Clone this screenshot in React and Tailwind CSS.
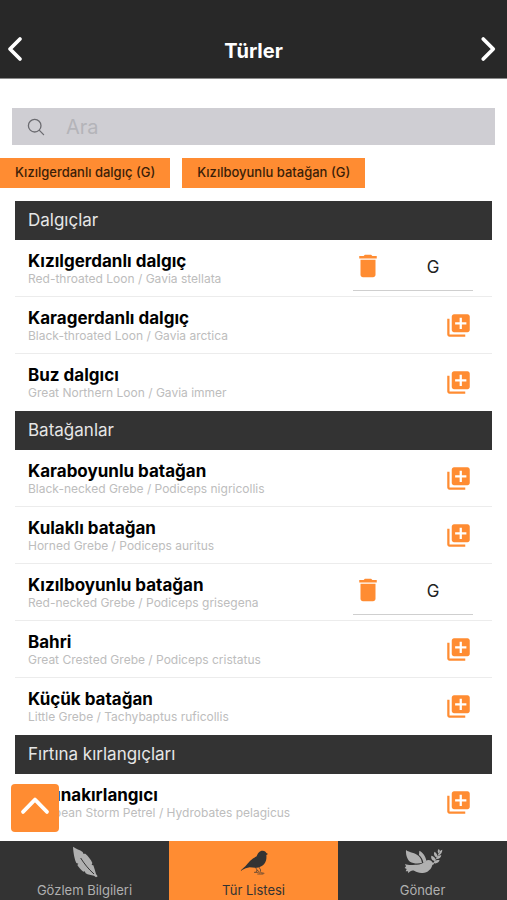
import { useState } from "react";
import { MdDelete, MdLibraryAdd } from "react-icons/md";

const GROUPS = [
  {
    title: "Dalgıçlar",
    species: [
      { name: "Kızılgerdanlı dalgıç", info: "Red-throated Loon / Gavia stellata" },
      { name: "Karagerdanlı dalgıç", info: "Black-throated Loon / Gavia arctica" },
      { name: "Buz dalgıcı", info: "Great Northern Loon / Gavia immer" },
    ],
  },
  {
    title: "Batağanlar",
    species: [
      { name: "Karaboyunlu batağan", info: "Black-necked Grebe / Podiceps nigricollis" },
      { name: "Kulaklı batağan", info: "Horned Grebe / Podiceps auritus" },
      { name: "Kızılboyunlu batağan", info: "Red-necked Grebe / Podiceps grisegena" },
      { name: "Bahri", info: "Great Crested Grebe / Podiceps cristatus" },
      { name: "Küçük batağan", info: "Little Grebe / Tachybaptus ruficollis" },
    ],
  },
  {
    title: "Fırtına kırlangıçları",
    species: [{ name: "Fırtınakırlangıcı", info: "European Storm Petrel / Hydrobates pelagicus" }],
  },
];

function Chevron({ d, className }) {
  return (
    <svg viewBox="0 0 24 24" fill="none" stroke="currentColor" strokeLinecap="round" strokeLinejoin="round" className={className}>
      <path d={d} />
    </svg>
  );
}

function SearchIcon() {
  return (
    <svg viewBox="0 0 18 18" fill="none" stroke="currentColor" strokeWidth="1.3" strokeLinecap="round" className="size-[18px] shrink-0 text-[#6b6b70]">
      <circle cx="7.7" cy="7.7" r="6.3" />
      <path d="M12.4 12.4 L16.6 16.6" />
    </svg>
  );
}

function FeatherIcon() {
  return (
    <svg viewBox="14 12 120 102" fill="currentColor" className="h-[34px] w-10">
      <path d="M38 17 C48 24 58 26 67 33 L69 38 L75 38 C84 46 92 56 96 66 L94 72 L99 73 C102 82 105 92 107 99 L112 106 L107 109 L101 104 C92 103 83 101 76 97 L73 91 L69 92 C62 87 55 79 51 72 L54 68 L48 66 C43 55 39 36 38 17 Z" />
      <path d="M61 51 C71 67 84 84 101 99" fill="none" stroke="#333333" strokeWidth="3" />
    </svg>
  );
}

function BirdIcon() {
  return (
    <svg viewBox="10 12 120 102" fill="currentColor" className="h-[34px] w-10">
      <path d="M28 90 L44 76 C54 63 64 52 78 46 C81 37 86 29 96 29 C102 29 106 32 107 36 L112 39 L107 42 C108 52 107 62 100 70 C95 76 87 79 79 80 C71 81 64 79 57 79 L45 82 Z" />
      <g fill="none" stroke="currentColor" strokeWidth="2">
        <path d="M74 78 L79 87 L76 94 M70 94 L84 94 M79 87 L85 92" />
        <path d="M84 77 L90 87 L87 97 M80 99 L98 99 M90 95 L101 97" />
      </g>
    </svg>
  );
}

function DoveIcon() {
  return (
    <svg viewBox="13 12 120 102" fill="currentColor" className="h-[34px] w-10">
      <path d="M22 27 C32 35 50 35 60 45 C67 52 69 60 70 66 C58 68 43 68 34 62 C25 55 21 40 22 27 Z" />
      <path d="M62 29 C73 35 82 47 83 60 L74 66 C73 57 69 49 61 42 Z" />
      <path d="M50 71 C62 72 72 69 80 61 C87 55 97 56 101 64 L107 68 L101 72 C98 84 88 95 72 96 C61 97 54 93 48 90 C40 87 35 90 29 97 L28 91 L21 91 L24 84 L18 81 L22 76 L19 69 C30 73 39 72 50 71 Z" />
      <path d="M103 70 C109 59 117 44 129 27" fill="none" stroke="currentColor" strokeWidth="2.5" />
      <path d="M109 60 C100 59 96 52 98 44 C106 46 112 51 109 60 Z M115 49 C107 47 104 40 107 32 C114 36 118 42 115 49 Z M121 38 C116 35 116 29 120 24 C125 28 125 33 121 38 Z M105 66 C112 69 120 66 123 58 C115 55 108 58 105 66 Z M113 54 C120 55 127 51 128 43 C120 42 115 46 113 54 Z M119 43 C126 41 131 35 131 26 C123 30 119 35 119 43 Z" />
    </svg>
  );
}

const TABS = [
  { id: "info", label: "Gözlem Bilgileri", Icon: FeatherIcon },
  { id: "list", label: "Tür Listesi", Icon: BirdIcon },
  { id: "send", label: "Gönder", Icon: DoveIcon },
];

function SpeciesRow({ item, code, onAdd, onRemove, onCode }) {
  return (
    <li className="flex h-[57px] items-center justify-between border-b border-[#ececec] pl-[13px] last:border-b-transparent">
      <div className="min-w-0 pt-0.5 whitespace-nowrap">
        <h3 className="text-[17px] leading-5 font-bold text-black">{item.name}</h3>
        <p className="text-[12px] leading-4 text-[#bdbdbd]">{item.info}</p>
      </div>
      {code !== undefined ? (
        <div className="mr-[19px] flex h-[46px] w-[120px] shrink-0 items-center border-b border-[#cfcfcf]">
          <button aria-label={`${item.name} sil`} onClick={onRemove} className="pb-1 text-[#ff8c32]">
            <MdDelete className="size-[30px]" />
          </button>
          <input
            aria-label={`${item.name} kodu`}
            value={code}
            onChange={(e) => onCode(e.target.value)}
            className="ml-auto w-20 bg-transparent text-center text-[17px] text-[#222222] outline-none"
          />
        </div>
      ) : (
        <button aria-label={`${item.name} ekle`} onClick={onAdd} className="mr-5 shrink-0 text-[#ff8c32]">
          <MdLibraryAdd className="size-[27px]" />
        </button>
      )}
    </li>
  );
}

export default function App() {
  const [query, setQuery] = useState("");
  const [tab, setTab] = useState("list");
  const [selected, setSelected] = useState({
    "Kızılgerdanlı dalgıç": "G",
    "Kızılboyunlu batağan": "G",
  });

  const setCode = (name, code) => setSelected((prev) => ({ ...prev, [name]: code }));

  const remove = (name) => {
    setSelected((prev) => {
      const next = { ...prev };
      delete next[name];
      return next;
    });
  };

  const matches = (item) => `${item.name} ${item.info}`.toLowerCase().includes(query.toLowerCase());

  return (
    <div className="flex h-screen flex-col bg-white font-[Inter,sans-serif]">
      <header className="flex items-center justify-between border-b border-[#8a8a8a] bg-[#282828] pt-5 text-white">
        <button aria-label="Geri" className="py-3.5">
          <Chevron d="M16 4 L8 12 L16 20" className="size-[30px] stroke-[3]" />
        </button>
        <h1 className="pt-1 text-[20px] leading-7 font-bold">Türler</h1>
        <button aria-label="İleri" className="py-3.5">
          <Chevron d="M5 4 L13 12 L5 20" className="size-[30px] stroke-[3]" />
        </button>
      </header>

      <div className="relative flex min-h-0 flex-1 flex-col">
        <label className="mx-3 mt-[29px] flex h-[37px] shrink-0 items-center gap-[21px] bg-[#cfced3] pl-[15px]">
          <SearchIcon />
          <input
            type="text"
            aria-label="Ara"
            placeholder="Ara"
            value={query}
            onChange={(e) => setQuery(e.target.value)}
            className="min-w-0 flex-1 bg-transparent text-[20px] text-[#333333] outline-none placeholder:text-[#b4b4b9]"
          />
        </label>

        <div className="mt-[13px] flex shrink-0 gap-3 overflow-hidden">
          {Object.entries(selected).map(([name, code]) => (
            <button key={name} className="h-[30px] shrink-0 bg-[#ff8c32] px-[15px] text-[13px] font-medium text-[#3a1e08]">
              {name} ({code})
            </button>
          ))}
        </div>

        <main className="mt-[13px] min-h-0 flex-1 overflow-y-auto px-[15px]">
          {GROUPS.map((group) => (
            <section key={group.title}>
              <h2 className="h-[39px] bg-[#333333] px-[13px] text-[17px] leading-[38px] text-[#e6e6e6]">{group.title}</h2>
              <ul>
                {group.species.filter(matches).map((item) => (
                  <SpeciesRow
                    key={item.name}
                    item={item}
                    code={selected[item.name]}
                    onAdd={() => setCode(item.name, "G")}
                    onRemove={() => remove(item.name)}
                    onCode={(code) => setCode(item.name, code)}
                  />
                ))}
              </ul>
            </section>
          ))}
        </main>

        <button aria-label="Yukarı" className="absolute bottom-[9px] left-[11px] flex size-12 items-center justify-center rounded bg-[#ff8c32] text-white">
          <Chevron d="M4 14.6 L12 6.4 L20 14.6" className="size-9 stroke-[2.5]" />
        </button>
      </div>

      <nav className="grid grid-cols-3">
        {TABS.map(({ id, label, Icon }) => (
          <button
            key={id}
            onClick={() => setTab(id)}
            className={`flex flex-col items-center pt-1 text-[13px] leading-5 ${
              tab === id ? "bg-[#ff8c32] text-[#333333]" : "bg-[#333333] text-[#b0b0b0]"
            }`}
          >
            <Icon />
            <span className="pt-px">{label}</span>
          </button>
        ))}
      </nav>
    </div>
  );
}
